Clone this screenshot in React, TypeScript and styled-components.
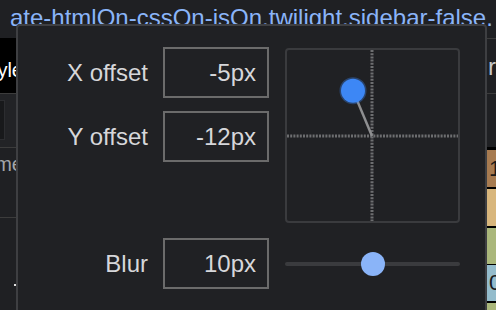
import React from "react";
import styled, { createGlobalStyle } from "styled-components";

const GlobalStyle = createGlobalStyle`
  html, body {
    margin: 0;
    padding: 0;
    background: #1f2023;
  }
  body {
    font-family: "Liberation Sans", Arial, sans-serif;
    overflow: hidden;
  }
`;

const Page = styled.div`
  position: relative;
  width: 496px;
  height: 310px;
  overflow: hidden;
  background: #1f2023;
`;

const Header = styled.div`
  height: 38px;
  box-sizing: border-box;
  padding: 4px 0 0 10px;
  font-size: 24px;
  line-height: 28px;
  color: #8ab4f8;
  white-space: nowrap;
  overflow: hidden;
`;

const Body = styled.div`
  display: flex;
  height: 272px;
`;

const SidePane = styled.div<{ $width: number }>`
  width: ${(p) => p.$width}px;
  flex-shrink: 0;
  display: flex;
  flex-direction: column;
  overflow: hidden;
`;

const Middle = styled.div`
  flex: 1;
`;

const PaneRow = styled.div<{
  $height: number;
  $bg?: string;
  $align?: "start" | "end";
  $top?: boolean;
  $bottom?: boolean;
}>`
  height: ${(p) => p.$height}px;
  flex-shrink: 0;
  box-sizing: border-box;
  background: ${(p) => p.$bg ?? "transparent"};
  border-top: ${(p) => (p.$top ? "1px solid #3c3c3c" : "none")};
  border-bottom: ${(p) => (p.$bottom ? "1px solid #3c3c3c" : "none")};
  display: flex;
  justify-content: ${(p) => (p.$align === "end" ? "flex-end" : "flex-start")};
  align-items: flex-start;
`;

const PaneText = styled.span<{
  $color: string;
  $size: number;
  $padTop: number;
  $shift?: number;
  $padLeft?: number;
}>`
  flex-shrink: 0;
  white-space: nowrap;
  font-size: ${(p) => p.$size}px;
  line-height: ${(p) => p.$size + 4}px;
  color: ${(p) => p.$color};
  padding-top: ${(p) => p.$padTop}px;
  padding-left: ${(p) => p.$padLeft ?? 0}px;
  margin-right: ${(p) => -(p.$shift ?? 0)}px;
`;

const FilterBox = styled.div`
  flex-shrink: 0;
  width: 60px;
  height: 40px;
  margin-top: 6px;
  margin-right: 11px;
  box-sizing: border-box;
  background: #18191b;
  border: 1px solid #2c2d30;
`;

const Marker = styled.div`
  align-self: flex-end;
  width: 2px;
  height: 2px;
  margin-top: 66px;
  background: #e0e0e0;
`;

const ColorCell = styled.div<{ $color: string; $height: number; $edge: number }>`
  flex-shrink: 0;
  height: ${(p) => p.$height}px;
  border-top: ${(p) => p.$edge}px solid #000;
  background: ${(p) => p.$color};
  color: #1b1b1b;
  font-size: 22px;
  line-height: ${(p) => p.$height}px;
  padding-left: 2px;
  white-space: nowrap;
  overflow: hidden;
`;

/* ---------- popover ---------- */

const Popover = styled.div`
  position: absolute;
  left: 16px;
  top: 24px;
  width: 471px;
  height: 300px;
  box-sizing: border-box;
  background: #202124;
  border: 2px solid #3e3f42;
  border-radius: 4px;
  padding: 21px 0 0 26px;
  font-size: 24px;
  color: #d6d7da;
`;

const TopSection = styled.div`
  display: flex;
  align-items: flex-start;
  gap: 16px;
`;

const Fields = styled.div`
  display: flex;
  flex-direction: column;
  gap: 13px;
`;

const Field = styled.div<{ $spaced?: boolean }>`
  display: flex;
  align-items: center;
  gap: 15px;
  margin-top: ${(p) => (p.$spaced ? 15 : 0)}px;
`;

const Label = styled.label`
  width: 104px;
  text-align: right;
  white-space: nowrap;
`;

const ValueInput = styled.input`
  width: 106px;
  height: 51px;
  margin: 0;
  box-sizing: border-box;
  border: 2px solid #6b6b6b;
  background: transparent;
  color: #d6d7da;
  font: inherit;
  text-align: right;
  padding: 0 11px 0 0;
  outline: none;
`;

const Pad = styled.div`
  position: relative;
  width: 175px;
  height: 175px;
  margin-top: 1px;
  box-sizing: border-box;
  border: 2px solid #3a3b3e;
  border-radius: 4px;
`;

const PadSvg = styled.svg`
  display: block;
  width: 171px;
  height: 171px;
`;

const Slider = styled.div`
  position: relative;
  width: 175px;
  height: 24px;
  margin-left: 1px;
  display: flex;
  align-items: center;
`;

const Track = styled.div`
  flex: 1;
  height: 4px;
  border-radius: 2px;
  background: #3a3b3e;
`;

const Thumb = styled.div`
  position: absolute;
  top: 0;
  width: 24px;
  height: 24px;
  border-radius: 50%;
  background: #8ab4f8;
  transform: translateX(-50%);
`;

const shadow = { x: -5, y: -12, blur: 10, blurMax: 20 };

function OffsetPad() {
  const cx = 85;
  const cy = 86;
  const kx = cx + shadow.x * 3.8;
  const ky = cy + shadow.y * 3.78;
  return (
    <Pad>
      <PadSvg viewBox="0 0 171 171">
        <line x1={cx} y1={0} x2={cx} y2={171} stroke="#6d6e70" strokeWidth={3} strokeDasharray="2 1.2" />
        <line x1={0} y1={cy} x2={171} y2={cy} stroke="#6d6e70" strokeWidth={3} strokeDasharray="2 1.2" />
        <line x1={cx} y1={cy} x2={kx} y2={ky} stroke="#8e8f91" strokeWidth={2.5} />
        <circle cx={kx} cy={ky} r={13.5} fill="#3d87f5" opacity={0.35} />
        <circle cx={kx} cy={ky} r={12} fill="#3d87f5" />
      </PadSvg>
    </Pad>
  );
}

export default function App() {
  const blurPct = (shadow.blur / shadow.blurMax) * 100;
  return (
    <>
      <GlobalStyle />
      <Page>
        <Header>ate-htmlOn-cssOn-isOn.twilight.sidebar-false.</Header>
        <Body>
          <SidePane $width={16}>
            <PaneRow $height={56} $bg="#000" $align="end" $bottom>
              <PaneText $color="#ffffff" $size={20} $padTop={20} $shift={7}>
                Style
              </PaneText>
            </PaneRow>
            <PaneRow $height={54} $bg="#222326" $align="end" $bottom>
              <FilterBox />
            </PaneRow>
            <PaneRow $height={70} $align="end" $bottom>
              <PaneText $color="#a3a5a8" $size={20} $padTop={4} $shift={7}>
                Name
              </PaneText>
            </PaneRow>
            <Marker />
          </SidePane>
          <Middle />
          <SidePane $width={9}>
            <PaneRow $height={56} $top $bottom>
              <PaneText $color="#c6c7c9" $size={24} $padTop={14} $padLeft={1}>
                rs
              </PaneText>
            </PaneRow>
            <PaneRow $height={53} />
            <ColorCell $color="#a77b50" $height={37} $edge={3}>1</ColorCell>
            <ColorCell $color="#d8b67c" $height={37} $edge={2} />
            <ColorCell $color="#aab77b" $height={36} $edge={2} />
            <ColorCell $color="#94bccc" $height={36} $edge={1}>0</ColorCell>
            <ColorCell $color="#aab77b" $height={20} $edge={2} />
          </SidePane>
        </Body>

        <Popover>
          <TopSection>
            <Fields>
              <Field>
                <Label>X offset</Label>
                <ValueInput readOnly value={`${shadow.x}px`} />
              </Field>
              <Field>
                <Label>Y offset</Label>
                <ValueInput readOnly value={`${shadow.y}px`} />
              </Field>
            </Fields>
            <OffsetPad />
          </TopSection>
          <Field $spaced>
            <Label>Blur</Label>
            <ValueInput readOnly value={`${shadow.blur}px`} />
            <Slider>
              <Track />
              <Thumb style={{ left: `${blurPct}%` }} />
            </Slider>
          </Field>
        </Popover>
      </Page>
    </>
  );
}
